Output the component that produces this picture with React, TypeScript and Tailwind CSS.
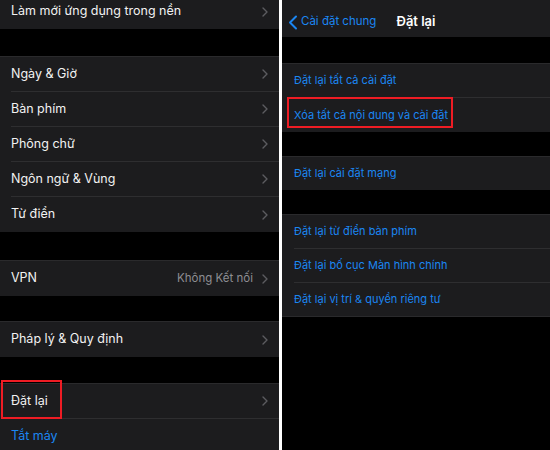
import React from 'react';

function Chevron() {
  return (
    <svg width="6" height="10" viewBox="0 0 6 10" className="shrink-0">
      <path d="M1 1l4 4-4 4" fill="none" stroke="#5c5c60" strokeWidth="1.4" strokeLinecap="round" strokeLinejoin="round" />
    </svg>
  );
}

type LeftRowProps = {
  label: string;
  value?: string;
  blue?: boolean;
  last?: boolean;
  chevron?: boolean;
  className?: string;
};

function LeftRow({ label, value, blue, last, chevron = true, className = '' }: LeftRowProps) {
  return (
    <div className={`h-[35px] pl-[11px] bg-[#1c1c1e] ${className}`}>
      <div className={`h-full flex items-center pr-[11px] ${last ? '' : 'border-b border-[#2e2e30]'}`}>
        <span className={`flex-1 text-[12.5px] ${blue ? 'text-[#1b86f2]' : 'text-[#f2f2f2]'}`}>{label}</span>
        {value && <span className="text-[11.5px] text-[#8e8e93] mr-[9px]">{value}</span>}
        {chevron && <Chevron />}
      </div>
    </div>
  );
}

function Gap({ h }: { h: string }) {
  return <div className={`${h} bg-black`} />;
}

function RightRow({ label, last, h = 'h-[34px]' }: { label: string; last?: boolean; h?: string }) {
  return (
    <div className={`${h} pl-[12px] bg-[#1c1c1e]`}>
      <div className={`h-full flex items-center ${last ? '' : 'border-b border-[#2e2e30]'}`}>
        <span className="text-[11px] text-[#1b86f2]">{label}</span>
      </div>
    </div>
  );
}

export default function App() {
  return (
    <div
      className="w-[550px] h-[450px] flex bg-white overflow-hidden"
      style={{ fontFamily: 'Inter, "Noto Sans", sans-serif' }}
    >
      {/* Left screen */}
      <div className="relative w-[279px] h-full bg-black overflow-hidden">
        <LeftRow label="Làm mới ứng dụng trong nền" last className="-mt-[6px]" />
        <Gap h="h-[27px]" />
        <div className="border-t border-[#2a2a2c]">
          <LeftRow label="Ngày & Giờ" />
          <LeftRow label="Bàn phím" />
          <LeftRow label="Phông chữ" />
          <LeftRow label="Ngôn ngữ & Vùng" />
          <LeftRow label="Từ điển" last />
        </div>
        <Gap h="h-[28px]" />
        <div className="border-t border-[#2a2a2c]">
          <LeftRow label="VPN" value="Không Kết nối" last />
        </div>
        <Gap h="h-[25px]" />
        <div className="border-t border-[#2a2a2c]">
          <LeftRow label="Pháp lý & Quy định" last />
        </div>
        <Gap h="h-[26px]" />
        <div className="border-t border-[#2a2a2c]">
          <LeftRow label="Đặt lại" />
          <LeftRow label="Tắt máy" blue chevron={false} last />
        </div>
        <div className="absolute left-[1px] top-[380px] w-[61px] h-[39px] border-2 border-[#ee1c24]" />
      </div>

      {/* Divider */}
      <div className="w-[3px] h-full bg-white" />

      {/* Right screen */}
      <div className="relative flex-1 h-full bg-black overflow-hidden">
        <div className="relative h-[37px] pt-[7px] bg-[#1c1c1e] flex items-center">
          <div className="flex items-center pl-[6px]">
            <svg width="10" height="15" viewBox="0 0 10 15">
              <path d="M8 1.5L2 7.5l6 6" fill="none" stroke="#1b86f2" strokeWidth="2" strokeLinecap="round" strokeLinejoin="round" />
            </svg>
            <span className="ml-[3px] text-[11.5px] text-[#1b86f2]">Cài đặt chung</span>
          </div>
          <span className="absolute left-0 right-0 text-center text-[13px] font-semibold text-white pointer-events-none">
            Đặt lại
          </span>
        </div>
        <Gap h="h-[26px]" />
        <div className="border-t border-[#2a2a2c]">
          <RightRow label="Đặt lại tất cả cài đặt" />
          <RightRow label="Xóa tất cả nội dung và cài đặt" last />
        </div>
        <Gap h="h-[24px]" />
        <div className="border-t border-[#2a2a2c]">
          <RightRow label="Đặt lại cài đặt mạng" last h="h-[33px]" />
        </div>
        <Gap h="h-[24px]" />
        <div className="border-t border-[#2a2a2c]">
          <RightRow label="Đặt lại từ điển bàn phím" />
          <RightRow label="Đặt lại bố cục Màn hình chính" />
          <RightRow label="Đặt lại vị trí & quyền riêng tư" last h="h-[33px]" />
        </div>
        <div className="border-t border-[#2a2a2c]" />
        <div className="absolute left-[5px] top-[97px] w-[166px] h-[31px] border-2 border-[#ee1c24]" />
      </div>
    </div>
  );
}
